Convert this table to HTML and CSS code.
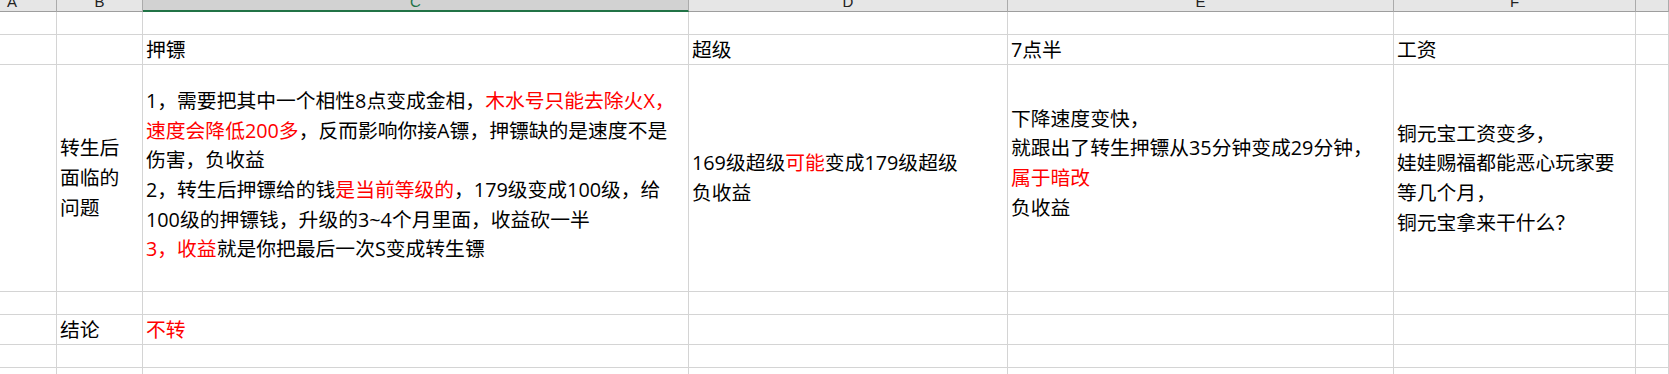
FILE: index.html
```html
<!DOCTYPE html>
<html lang="zh-CN">
<head>
<meta charset="utf-8">
<title>Sheet</title>
<link rel="stylesheet" href="styles.css">
</head>
<body>
<div class="sheet">
  <div class="hd hd-a"><span>A</span></div>
  <div class="hd"><span>B</span></div>
  <div class="hd sel"><span>C</span></div>
  <div class="hd"><span>D</span></div>
  <div class="hd"><span>E</span></div>
  <div class="hd"><span>F</span></div>
  <div class="hd"></div>

  <div class="c"></div><div class="c"></div><div class="c"></div><div class="c"></div><div class="c"></div><div class="c"></div><div class="c"></div>

  <div class="c"></div>
  <div class="c"></div>
  <div class="c">押镖</div>
  <div class="c">超级</div>
  <div class="c">7点半</div>
  <div class="c">工资</div>
  <div class="c"></div>

  <div class="c"></div>
  <div class="c">转生后<br>面临的<br>问题</div>
  <div class="c c-long"><p>1，需要把其中一个相性8点变成金相，<span class="red">木水号只能去除火X，</span><br><span class="red">速度会降低200多</span>，反而影响你接A镖，押镖缺的是速度不是<br>伤害，负收益<br>2，转生后押镖给的钱<span class="red">是当前等级的</span>，179级变成100级，给<br>100级的押镖钱，升级的3~4个月里面，收益砍一半<br><span class="red">3，收益</span>就是你把最后一次S变成转生镖</p></div>
  <div class="c"><p>169级超级<span class="red">可能</span>变成179级超级<br>负收益</p></div>
  <div class="c c-trail"><p>下降速度变快，<br>就跟出了转生押镖从35分钟变成29分钟，<br><span class="red">属于暗改</span><br>负收益</p></div>
  <div class="c"><p>铜元宝工资变多，<br>娃娃赐福都能恶心玩家要<br>等几个月，<br>铜元宝拿来干什么？</p></div>
  <div class="c"></div>

  <div class="c"></div><div class="c"></div><div class="c"></div><div class="c"></div><div class="c"></div><div class="c"></div><div class="c"></div>

  <div class="c"></div>
  <div class="c">结论</div>
  <div class="c red">不转</div>
  <div class="c"></div><div class="c"></div><div class="c"></div><div class="c"></div>

  <div class="c"></div><div class="c"></div><div class="c"></div><div class="c"></div><div class="c"></div><div class="c"></div><div class="c"></div>
  <div class="c"></div><div class="c"></div><div class="c"></div><div class="c"></div><div class="c"></div><div class="c"></div><div class="c"></div>
</div>
</body>
</html>
```

FILE: styles.css
```css
* { box-sizing: border-box; }
html, body {
  margin: 0;
  padding: 0;
  background: #ffffff;
  overflow: hidden;
}
.sheet {
  display: grid;
  grid-template-columns: 57px 86px 546px 319px 386px 242px 1fr;
  grid-template-rows: 12px 23px 30px 227px 23px 30px 23px 23px;
  width: 1669px;
  height: 374px;
  overflow: hidden;
  font-family: "Open Sans", "Noto Sans CJK SC", sans-serif;
  font-size: 19.8px;
  color: #000000;
}
.hd {
  background: #e6e6e6;
  border-right: 1px solid #ababab;
  border-bottom: 1px solid #9e9e9e;
  display: flex;
  align-items: flex-end;
  justify-content: center;
  overflow: hidden;
  font-family: "Liberation Sans", sans-serif;
  font-size: 15px;
  color: #222222;
  padding-bottom: 2px;
}
.hd span {
  line-height: 15px;
  flex: none;
}
.hd-a {
  justify-content: flex-start;
  padding-left: 7px;
}
.hd.sel {
  background: #d2d2d2;
  border-bottom: 2px solid #217346;
  color: #217346;
  padding-bottom: 1px;
}
.c {
  border-right: 1px solid #d4d4d4;
  border-bottom: 1px solid #d4d4d4;
  display: flex;
  align-items: center;
  padding: 0 3px;
  line-height: 29.7px;
  white-space: nowrap;
  overflow: visible;
}
.c p {
  margin: 0;
}
.c-long {
  padding-bottom: 6px;
}
.c-trail {
  padding-bottom: 30px;
}
.red {
  color: #ff0000;
}
```
